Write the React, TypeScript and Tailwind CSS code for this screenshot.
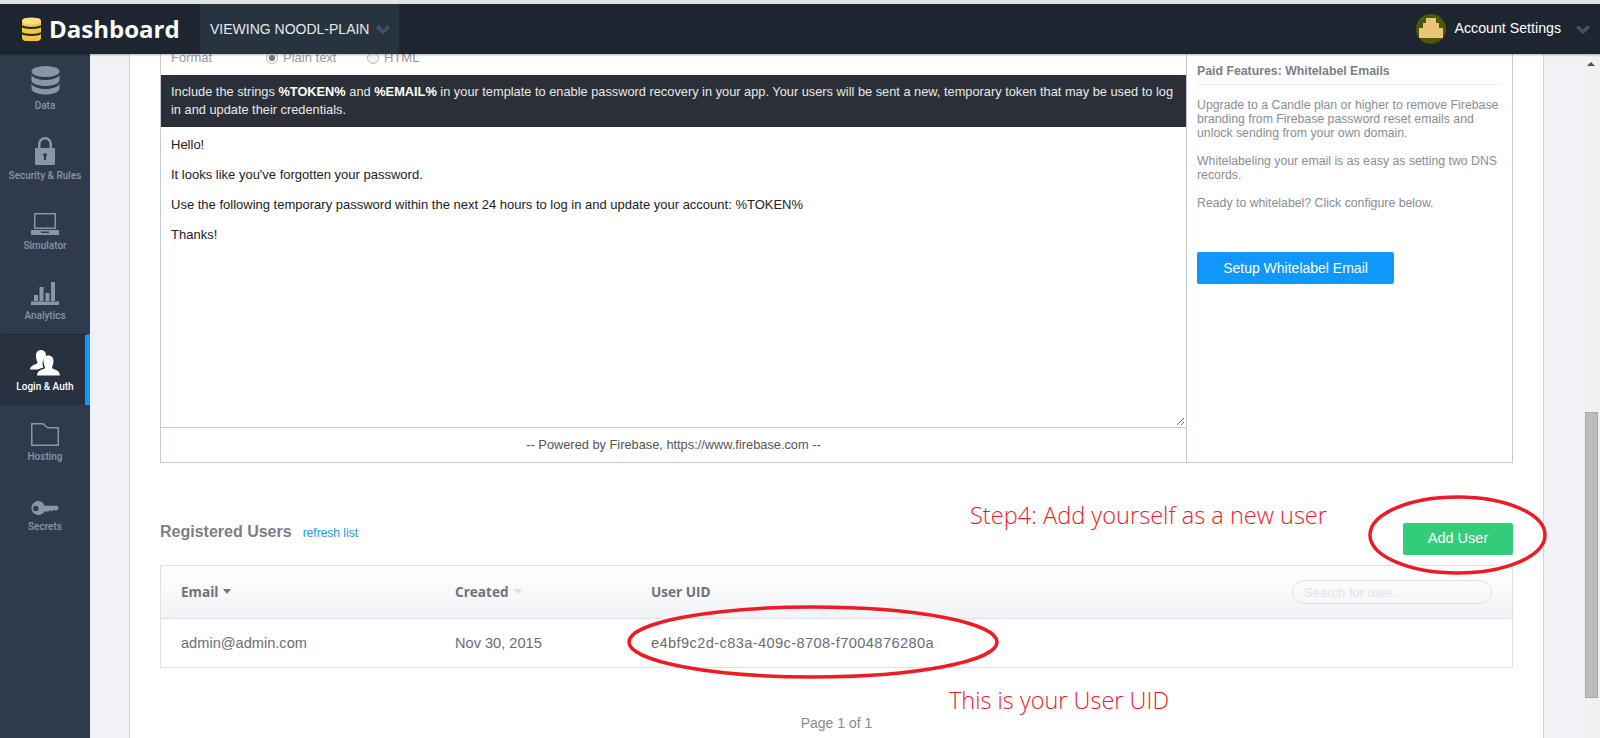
const sans = 'font-["Liberation_Sans",Arial,sans-serif]';

function DataIcon() {
  return (
    <svg width="29" height="29" viewBox="0 0 29 29" fill="#8896aa">
      <ellipse cx="14.5" cy="5.5" rx="14" ry="5.5" />
      <path d="M.5 9c2 3.5 8 5 14 5s12-1.500 14-5v5c0 3.500-6.500 6-14 6s-14-2.500-14-6z" />
      <path d="M.5 18c2 3.500 8 5 14 5s12-1.500 14-5v4.500c0 3.500-6.500 6-14 6s-14-2.500-14-6z" />
    </svg>
  );
}

function LockIcon() {
  return (
    <svg width="20" height="28" viewBox="0 0 20 28" fill="#8896aa">
      <path fillRule="evenodd" d="M1 11h2V7a7 7 0 0 1 14 0v4h2a1 1 0 0 1 1 1v15a1 1 0 0 1-1 1H1a1 1 0 0 1-1-1V12a1 1 0 0 1 1-1zm4.500 0h9V7a4.500 4.500 0 0 0-9 0zM10 16a2 2 0 0 0-1 3.700V23h2v-3.300A2 2 0 0 0 10 16z" />
    </svg>
  );
}

function LaptopIcon() {
  return (
    <svg width="28" height="22" viewBox="0 0 28 22" fill="#8896aa">
      <path fillRule="evenodd" d="M3 0h22v16H3zm1.500 1.500v13h19v-13z" />
      <path fillRule="evenodd" d="M0 17h28v5H0zm10 1.500V20h8v-1.500z" />
    </svg>
  );
}

function BarsIcon() {
  return (
    <svg width="28" height="23" viewBox="0 0 28 23" fill="#8896aa">
      <rect x="3" y="13" width="4" height="6" />
      <rect x="8.500" y="5" width="4" height="14" />
      <rect x="14.500" y="11" width="4" height="8" />
      <rect x="20" y="0" width="4" height="19" />
      <rect x="0" y="19.500" width="28" height="3.500" />
    </svg>
  );
}

function UsersIcon() {
  return (
    <svg width="30" height="26" viewBox="0 0 30 26" fill="#fff">
      <path d="M11 0c3 0 5 2.300 5 5.500 0 .8-.1 1.400-.3 2-2 1-3.200 3.300-3.200 6 0 1.500.4 2.800 1 3.900-2.300.5-4.300 1.200-5.800 2.100H0c.3-3 3-4.600 6.800-5.700.6-.6.7-1.600.4-2.300C6.500 10.300 6 8 6 5.500 6 2.300 8 0 11 0z" />
      <path d="M18.500 5.500c3 0 5 2.300 5 5.500 0 2.200-.6 4.300-1.300 5.500-.3.800-.2 1.800.5 2.300 4 1.200 7 2.600 7.300 6.700H7c.3-4.100 3.300-5.500 7.300-6.700.7-.5.800-1.500.5-2.300-.7-1.200-1.300-3.300-1.300-5.500 0-3.200 2-5.500 5-5.500z" />
    </svg>
  );
}

function FolderIcon() {
  return (
    <svg width="28" height="23" viewBox="0 0 28 23" fill="none" stroke="#8896aa" strokeWidth="1.500">
      <path d="M.75.75h11l5 4h10.500v17.500H.75z" />
    </svg>
  );
}

function KeyIcon() {
  return (
    <svg width="28" height="15" viewBox="0 0 28 15" fill="#8896aa">
      <path fillRule="evenodd" d="M7 0a7 7 0 0 1 6.600 4.700H26l2 2.300-2 2.500h-2l-1-1-1 1.500h-1.500L19 9l-1.500 1.500h-4A7 7 0 1 1 7 0zM4.800 4.800a2.700 2.700 0 1 0 0 5.400 2.700 2.700 0 0 0 0-5.400z" />
    </svg>
  );
}

function Chevron() {
  return (
    <svg width="14" height="9" viewBox="0 0 14 9" fill="none" stroke="#3f5269" strokeWidth="3.500">
      <path d="M1.200 1.500 7 7l5.800-5.500" />
    </svg>
  );
}

function Radio({ on }: { on?: boolean }) {
  return (
    <span className="w-3 h-3 rounded-full border border-[#bbbbbb] bg-[#f4f4f4] flex items-center justify-center shrink-0">
      {on && <span className="w-1.5 h-1.5 rounded-full bg-[#777777]" />}
    </span>
  );
}

const navItems = [
  { label: 'Data', icon: <DataIcon /> },
  { label: 'Security & Rules', icon: <LockIcon /> },
  { label: 'Simulator', icon: <LaptopIcon /> },
  { label: 'Analytics', icon: <BarsIcon /> },
  { label: 'Login & Auth', icon: <UsersIcon />, active: true },
  { label: 'Hosting', icon: <FolderIcon /> },
  { label: 'Secrets', icon: <KeyIcon /> },
];

export default function App() {
  return (
    <div className={`relative w-[1600px] h-[738px] overflow-hidden flex flex-col bg-white ${sans}`}>
      <div className="h-1 bg-[#e4e4e4] shrink-0" />

      {/* Header */}
      <header className="relative z-10 h-[50px] shrink-0 bg-[#1d2630] flex items-center shadow-[0_1px_2px_rgba(0,0,0,0.3)]">
        <div className="w-[200px] h-full flex items-center pl-[22px] gap-2">
          <svg width="19" height="25" viewBox="0 0 19 25">
            <rect x="0" y="1" width="19" height="23" rx="4" fill="#f3c83c" />
            <ellipse cx="9.500" cy="4" rx="9.500" ry="3.500" fill="#fbe27a" />
            <path d="M0 9c3 2.500 16 2.500 19 0M0 16c3 2.500 16 2.500 19 0" stroke="#1d2630" strokeWidth="2" fill="none" />
          </svg>
          <span className='text-white text-[24px] font-bold font-["Open_Sans",sans-serif]'>Dashboard</span>
        </div>
        <div className="w-[199px] h-full bg-[#283340] flex items-center pl-[10px] gap-[7px]">
          <span className="text-[#e6e8eb] text-sm">VIEWING NOODL-PLAIN</span>
          <Chevron />
        </div>
        <div className="ml-auto flex items-center pr-[10px]">
          <div className="w-[30px] h-[30px] rounded-full overflow-hidden bg-[#4b5a00] flex justify-center">
            <svg width="30" height="30" viewBox="0 0 30 30">
              <path d="M10 4h10v5h3v5h4v10H3V14h4V9h3z" fill="#ecc478" />
            </svg>
          </div>
          <span className="ml-[9px] text-white text-[14.2px]">Account Settings</span>
          <span className="ml-[15px]">
            <Chevron />
          </span>
        </div>
      </header>

      <div className="flex flex-1 min-h-0">
        {/* Sidebar */}
        <aside className="w-[90px] shrink-0 bg-[#2f3b4c] flex flex-col">
          {navItems.map(item => (
            <div
              key={item.label}
              className={`flex flex-col items-center justify-end pb-[12px] ${
                item.active
                  ? 'h-[71px] bg-[#283140] border-t border-t-[#1d2630] border-x-[5px] border-l-transparent border-r-[#1097fb]'
                  : 'h-[70px]'
              }`}
            >
              <div className="h-[32px] flex items-end justify-center">{item.icon}</div>
              <span
                className={`mt-[4px] h-[13px] leading-[13px] text-[10px] font-medium font-["Roboto",sans-serif] whitespace-nowrap ${
                  item.active ? 'text-white' : 'text-[#8896aa]'
                }`}
              >
                {item.label}
              </span>
            </div>
          ))}
        </aside>

        {/* Main */}
        <main className="flex-1 min-w-0 bg-[#f0f2f6] pl-[39px] pr-[39px]">
          <div className="h-full bg-white border-x border-[#d0d3dc] px-[30px] flex flex-col">
            <div className="h-[409px] shrink-0 border-x border-b border-[#c5cadb] flex">
              <div className="w-[1026px] flex flex-col border-r border-[#c5cadb]">
                <div className="h-[21px] overflow-hidden shrink-0">
                  <div className="-mt-[4px] flex items-center h-[16px] pl-[10px] text-[13px] text-[#999999]">
                    <span className="w-[95px]">Format</span>
                    <Radio on />
                    <span className="ml-[5px] w-[84px]">Plain text</span>
                    <Radio />
                    <span className="ml-[5px]">HTML</span>
                  </div>
                </div>
                <div className="h-[52px] shrink-0 bg-[#2b3038] px-[10px] py-[8px] text-[12.8px] leading-[18px] text-[#e8e9eb]">
                  Include the strings <b className="text-white">%TOKEN%</b> and <b className="text-white">%EMAIL%</b> in your template to enable password recovery in your app. Your users will be sent a new, temporary token that may be used to log in and update their credentials.
                </div>
                <div className="relative flex-1 px-[10px] pt-[10px] text-[13px] leading-[16px] text-[#222222] flex flex-col gap-[14px]">
                  <p>Hello!</p>
                  <p>It looks like you've forgotten your password.</p>
                  <p>Use the following temporary password within the next 24 hours to log in and update your account: %TOKEN%</p>
                  <p>Thanks!</p>
                  <svg className="absolute right-px bottom-px" width="9" height="9" viewBox="0 0 9 9" stroke="#777777" strokeWidth="1">
                    <path d="M1 8 8 1M5 8l3-3" />
                  </svg>
                </div>
                <div className="h-[35px] shrink-0 border-t border-[#c5cadb] flex items-center justify-center text-[12.8px] text-[#555555]">
                  -- Powered by Firebase, https://www.firebase.com --
                </div>
              </div>
              <div className="flex-1 px-[10px] pt-[10px] text-[12.3px] leading-[14px] text-[#8a8d94]">
                <h3 className="font-bold text-[#7b7f87] pb-[6px] border-b border-[#eeeeee]">Paid Features: Whitelabel Emails</h3>
                <p className="mt-[13px]">Upgrade to a Candle plan or higher to remove Firebase branding from Firebase password reset emails and unlock sending from your own domain.</p>
                <p className="mt-[14px]">Whitelabeling your email is as easy as setting two DNS records.</p>
                <p className="mt-[14px]">Ready to whitelabel? Click configure below.</p>
                <button className="mt-[42px] w-[197px] h-8 rounded-[2px] bg-[#1097fb] text-white text-sm">Setup Whitelabel Email</button>
              </div>
            </div>

            <div className="h-[102px] shrink-0 flex items-end justify-between pb-[10px]">
              <div className="flex items-baseline gap-[11px] pb-[11px]">
                <span className="text-base font-bold text-[#7b7f87]">Registered Users</span>
                <span className="text-xs text-[#2196f3]">refresh list</span>
              </div>
              <button className="w-[110px] h-8 rounded-[2px] bg-[#33cc7a] text-white text-[14.5px]">Add User</button>
            </div>

            <div className="shrink-0 border border-[#e0e0ea]">
              <div className="h-[53px] border-b border-[#e0e0ea] bg-gradient-to-b from-white to-[#f2f3f7] flex items-center pl-5 pr-5 text-[13.6px] font-bold text-[#6f737b] font-['Open_Sans',sans-serif]">
                <span className="w-[274px] flex items-center gap-[5px]">
                  Email
                  <span className="w-0 h-0 border-x-[4px] border-x-transparent border-t-[5px] border-t-[#6f737b]" />
                </span>
                <span className="w-[196px] flex items-center gap-[5px]">
                  Created
                  <span className="w-0 h-0 border-x-[4px] border-x-transparent border-t-[5px] border-t-[#dddfe6]" />
                </span>
                <span>User UID</span>
                <input
                  placeholder="Search for user..."
                  className={`ml-auto w-[200px] h-6 rounded-full border border-[#e0e2ea] bg-transparent px-[11px] text-[13px] outline-none placeholder:text-[#e0e2ea] font-normal ${sans}`}
                />
              </div>
              <div className="h-[48px] flex items-center pl-5 pt-px text-[14.6px] text-[#6a6d74]">
                <span className="w-[274px]">admin@admin.com</span>
                <span className="w-[196px]">Nov 30, 2015</span>
                <span className="tracking-[0.4px]">e4bf9c2d-c83a-409c-8708-f7004876280a</span>
              </div>
            </div>

            <p className="mt-[45px] text-center text-sm text-[#888b92]">Page 1 of 1</p>
          </div>
        </main>

        {/* Scrollbar */}
        <div className="relative w-[17px] shrink-0 bg-[#f1f1f1]">
          <span className="absolute left-[4px] top-[8px] w-0 h-0 border-x-[4px] border-x-transparent border-b-[4px] border-b-[#505050]" />
          <div className="absolute left-[2px] top-[358px] w-[13px] h-[286px] bg-[#bcbcbc] border border-[#a8a8a8]" />
        </div>
      </div>

      {/* Red annotations drawn over the page */}
      <div className="absolute inset-0 z-20 pointer-events-none">
        <svg className="absolute left-0 top-0" width="1600" height="738" fill="none" stroke="#ed1c24" strokeWidth="3.500">
          <ellipse cx="1457.500" cy="535" rx="87.500" ry="38" />
          <ellipse cx="813" cy="642" rx="184" ry="35" />
        </svg>
        <span className='absolute left-[970px] top-[499px] text-[23.6px] leading-[32px] font-light text-[#ed1c24] font-["Open_Sans",sans-serif] whitespace-nowrap'>Step4: Add yourself as a new user</span>
        <span className='absolute left-[949px] top-[684px] text-[23.5px] leading-[32px] font-light text-[#ed1c24] font-["Open_Sans",sans-serif] whitespace-nowrap'>This is your User UID</span>
      </div>
    </div>
  );
}
